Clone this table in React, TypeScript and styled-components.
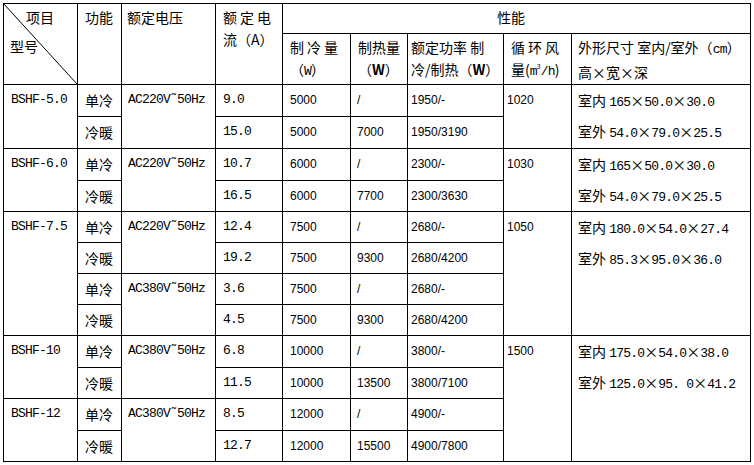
import React from "react";
import styled, { createGlobalStyle, css } from "styled-components";

const GlobalStyle = createGlobalStyle`
  html, body {
    margin: 0;
    background: #fff;
  }
  * {
    box-sizing: border-box;
  }
`;

const Page = styled.div`
  padding: 3px 0 0 3px;
`;

const Table = styled.table`
  border-collapse: separate;
  border-spacing: 0;
  table-layout: fixed;
  width: 748px;
  border-left: 1px solid #000;
  border-top: 1px solid #000;
  color: #000;
  font-family: "Noto Sans CJK SC", sans-serif;
  font-size: 14px;
`;

const Col = styled.col<{ $w: number }>`
  width: ${(p) => p.$w}px;
`;

const Tr = styled.tr<{ $h: number }>`
  height: ${(p) => p.$h}px;
`;

type Kind = "cjk" | "mono" | "sans";

const monoFont = css`
  font-family: "Liberation Mono", "Noto Sans CJK SC", monospace;
  font-size: 13px;
  letter-spacing: -0.8px;
`;

const fonts = {
  cjk: css`
    font-family: "Noto Sans CJK SC", sans-serif;
    font-size: 14px;
  `,
  mono: monoFont,
  sans: css`
    font-family: "Liberation Sans", sans-serif;
    font-size: 12px;
  `,
};

const Cell = styled.td<{ $kind?: Kind; $pl?: number }>`
  border-right: 1px solid #000;
  border-bottom: 1px solid #000;
  vertical-align: top;
  padding: 5px 2px 0 ${(p) => p.$pl ?? 7}px;
  line-height: 20px;
  white-space: nowrap;
  overflow: hidden;
  ${(p) => fonts[p.$kind ?? "cjk"]}
`;

const Head = styled.th<{ $pl?: number; $center?: boolean }>`
  border-right: 1px solid #000;
  border-bottom: 1px solid #000;
  vertical-align: top;
  text-align: ${(p) => (p.$center ? "center" : "left")};
  font-weight: normal;
  padding: 2px 2px 0 ${(p) => p.$pl ?? 7}px;
  line-height: 22px;
  white-space: nowrap;
  font-family: "Noto Sans CJK SC", sans-serif;
  font-size: 14px;
`;

const Corner = styled.th`
  position: relative;
  border-right: 1px solid #000;
  border-bottom: 1px solid #000;
  vertical-align: top;
  text-align: left;
  font-weight: normal;
  padding: 2px 0 0 6px;
  line-height: 22px;
  font-size: 14px;
`;

const CornerTop = styled.div`
  padding-left: 16px;
`;

const CornerBottom = styled.div`
  margin-top: 7px;
`;

const Diagonal = styled.svg`
  position: absolute;
  top: -1px;
  left: -1px;
  width: calc(100% + 1px);
  height: calc(100% + 1px);
  pointer-events: none;
`;

const Mono = styled.span`
  ${monoFont}
`;

const Times = styled.span`
  display: inline-block;
  width: 14px;
  text-align: center;
  font-family: "Noto Sans CJK SC", sans-serif;
  font-size: 14px;
`;

const Sup = styled.sup`
  font-size: 7px;
  line-height: 0;
  vertical-align: 6px;
`;

const DimLine = styled.div<{ $first?: boolean }>`
  height: ${(p) => (p.$first ? "31px" : "auto")};
  line-height: 20px;
`;

const Spaced = styled.span`
  letter-spacing: 3px;
`;

const Centered = styled.span`
  padding-right: 16px;
`;

type Row = { func: string; current: string; cool: string; heat: string; power: string };
type Model = { name: string; voltages: { label: string; rows: Row[] }[] };
type Block = { airflow: string; indoor: string; outdoor: string; models: Model[] };

const blocks: Block[] = [
  {
    airflow: "1020",
    indoor: "165×50.0×30.0",
    outdoor: "54.0×79.0×25.5",
    models: [
      {
        name: "BSHF-5.0",
        voltages: [
          {
            label: "AC220V˜50Hz",
            rows: [
              { func: "单冷", current: "9.0", cool: "5000", heat: "/", power: "1950/-" },
              { func: "冷暖", current: "15.0", cool: "5000", heat: "7000", power: "1950/3190" },
            ],
          },
        ],
      },
    ],
  },
  {
    airflow: "1030",
    indoor: "165×50.0×30.0",
    outdoor: "54.0×79.0×25.5",
    models: [
      {
        name: "BSHF-6.0",
        voltages: [
          {
            label: "AC220V˜50Hz",
            rows: [
              { func: "单冷", current: "10.7", cool: "6000", heat: "/", power: "2300/-" },
              { func: "冷暖", current: "16.5", cool: "6000", heat: "7700", power: "2300/3630" },
            ],
          },
        ],
      },
    ],
  },
  {
    airflow: "1050",
    indoor: "180.0×54.0×27.4",
    outdoor: "85.3×95.0×36.0",
    models: [
      {
        name: "BSHF-7.5",
        voltages: [
          {
            label: "AC220V˜50Hz",
            rows: [
              { func: "单冷", current: "12.4", cool: "7500", heat: "/", power: "2680/-" },
              { func: "冷暖", current: "19.2", cool: "7500", heat: "9300", power: "2680/4200" },
            ],
          },
          {
            label: "AC380V˜50Hz",
            rows: [
              { func: "单冷", current: "3.6", cool: "7500", heat: "/", power: "2680/-" },
              { func: "冷暖", current: "4.5", cool: "7500", heat: "9300", power: "2680/4200" },
            ],
          },
        ],
      },
    ],
  },
  {
    airflow: "1500",
    indoor: "175.0×54.0×38.0",
    outdoor: "125.0×95. 0×41.2",
    models: [
      {
        name: "BSHF-10",
        voltages: [
          {
            label: "AC380V˜50Hz",
            rows: [
              { func: "单冷", current: "6.8", cool: "10000", heat: "/", power: "3800/-" },
              { func: "冷暖", current: "11.5", cool: "10000", heat: "13500", power: "3800/7100" },
            ],
          },
        ],
      },
      {
        name: "BSHF-12",
        voltages: [
          {
            label: "AC380V˜50Hz",
            rows: [
              { func: "单冷", current: "8.5", cool: "12000", heat: "/", power: "4900/-" },
              { func: "冷暖", current: "12.7", cool: "12000", heat: "15500", power: "4900/7800" },
            ],
          },
        ],
      },
    ],
  },
];

const colWidths = [74, 44, 94, 67, 68, 57, 96, 68, 179];
const rowHeights = [32, 32, 32, 31, 31, 31, 31, 31, 32, 31, 32, 31];

function Dims({ label, value, first }: { label: string; value: string; first?: boolean }) {
  const parts = value.split("×");
  return (
    <DimLine $first={first}>
      {label}{" "}
      {parts.map((part, idx) => (
        <React.Fragment key={idx}>
          {idx > 0 && <Times>×</Times>}
          <Mono>{part}</Mono>
        </React.Fragment>
      ))}
    </DimLine>
  );
}

export default function App() {
  const bodyRows: React.ReactNode[] = [];
  let rowIdx = 0;

  blocks.forEach((block, bIdx) => {
    const blockSpan = block.models.reduce(
      (n, m) => n + m.voltages.reduce((k, v) => k + v.rows.length, 0),
      0
    );
    block.models.forEach((model, mIdx) => {
      const modelSpan = model.voltages.reduce((k, v) => k + v.rows.length, 0);
      model.voltages.forEach((volt, vIdx) => {
        volt.rows.forEach((row, rIdx) => {
          const firstOfModel = vIdx === 0 && rIdx === 0;
          const firstOfBlock = mIdx === 0 && firstOfModel;
          bodyRows.push(
            <Tr key={`${bIdx}-${mIdx}-${vIdx}-${rIdx}`} $h={rowHeights[rowIdx]}>
              {firstOfModel && (
                <Cell rowSpan={modelSpan} $kind="mono" $pl={7}>
                  {model.name}
                </Cell>
              )}
              <Cell>{row.func}</Cell>
              {rIdx === 0 && (
                <Cell rowSpan={volt.rows.length} $kind="mono" $pl={6}>
                  {volt.label}
                </Cell>
              )}
              <Cell $kind="mono">{row.current}</Cell>
              <Cell $kind="sans">{row.cool}</Cell>
              <Cell $kind="sans" $pl={6}>{row.heat}</Cell>
              <Cell $kind="sans" $pl={3}>{row.power}</Cell>
              {firstOfBlock && (
                <Cell rowSpan={blockSpan} $kind="sans" $pl={3}>
                  {block.airflow}
                </Cell>
              )}
              {firstOfBlock && (
                <Cell rowSpan={blockSpan} $pl={6}>
                  <Dims label="室内" value={block.indoor} first />
                  <Dims label="室外" value={block.outdoor} />
                </Cell>
              )}
            </Tr>
          );
          rowIdx++;
        });
      });
    });
  });

  return (
    <Page>
      <GlobalStyle />
      <Table>
        <colgroup>
          {colWidths.map((w, idx) => (
            <Col key={idx} $w={w} />
          ))}
        </colgroup>
        <thead>
          <Tr $h={30}>
            <Corner rowSpan={2}>
              <Diagonal preserveAspectRatio="none">
                <line x1="0" y1="0" x2="100%" y2="100%" stroke="#000" strokeWidth="1" />
              </Diagonal>
              <CornerTop>项目</CornerTop>
              <CornerBottom>型号</CornerBottom>
            </Corner>
            <Head rowSpan={2}>功能</Head>
            <Head rowSpan={2} $pl={5}>额定电压</Head>
            <Head rowSpan={2}>
              <Spaced>额定电</Spaced>
              <br />
              流（A）
            </Head>
            <Head colSpan={5} $center>
              <Centered>性能</Centered>
            </Head>
          </Tr>
          <Tr $h={51}>
            <Head>
              <Spaced>制冷量</Spaced>
              <br />
              （<Mono>W</Mono>）
            </Head>
            <Head>
              制热量
              <br />
              （<b>W</b>）
            </Head>
            <Head $pl={3}>
              额定功率 制
              <br />
              冷/制热（<b>W</b>）
            </Head>
            <Head>
              <Spaced>循环风</Spaced>
              <br />
              量(<Mono>m</Mono>
              <Sup>3</Sup>
              <Mono>/h</Mono>)
            </Head>
            <Head $pl={6}>
              外形尺寸 室内/室外（<Mono>cm</Mono>）
              <br />
              高×宽×深
            </Head>
          </Tr>
        </thead>
        <tbody>{bodyRows}</tbody>
      </Table>
    </Page>
  );
}
